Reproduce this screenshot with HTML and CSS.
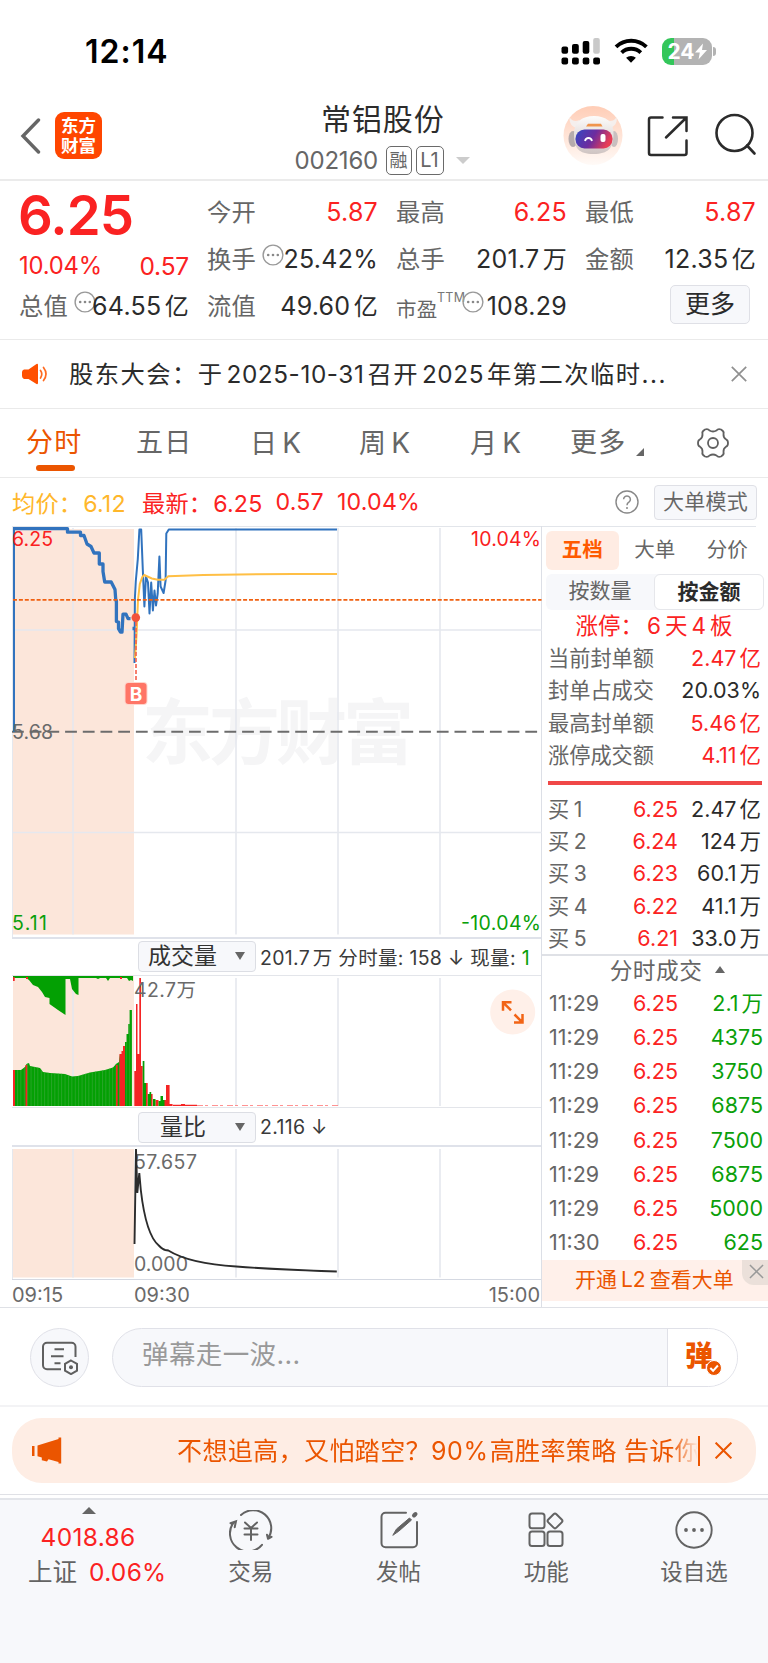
FILE: index.html
```html
<!DOCTYPE html>
<html lang="zh-CN">
<head>
<meta charset="utf-8">
<title>常铝股份 002160</title>
<link rel="stylesheet" href="styles.css">
</head>
<body>
<div class="app">
  <div class="status">
    <div class="clock">12:14</div>
    <svg class="signal" viewBox="560 34 106 34" width="106" height="34">
      <g fill="#000">
        <rect x="561.5" y="46.5" width="6.6" height="7.3" rx="2"/><rect x="572" y="44" width="6.8" height="9.8" rx="2"/><rect x="582.7" y="41" width="6.6" height="12.8" rx="2"/>
        <rect x="561.5" y="57.4" width="6.6" height="7" rx="2"/><rect x="572" y="57.4" width="6.8" height="7" rx="2"/><rect x="582.7" y="57.4" width="6.6" height="7" rx="2"/><rect x="593.2" y="57.4" width="6.8" height="7" rx="2"/>
      </g>
      <rect x="593.2" y="38" width="6.6" height="15.8" rx="2" fill="#c9c9c9"/>
      <g fill="none" stroke="#000" stroke-width="3.9"><path d="M616 46.8a22 22 0 0 1 30.400 0"/><path d="M621.600 52.600a14 14 0 0 1 19.200 0"/></g>
      <path d="M631 62.800l-4.900-5a7.300 7.300 0 0 1 9.800 0z"/>
    </svg>
    <div class="battery"><span>24</span><svg viewBox="0 0 12 16" width="12" height="17"><path d="M8 0L0 9h4.800L3.500 16 12 6.500H7z" fill="#fff"/></svg></div>
  </div>

  <header class="head">
    <svg class="back" viewBox="0 0 22 36" width="22" height="36"><path d="M18.500 2L3 18l15.500 16" fill="none" stroke="#666" stroke-width="3.4" stroke-linecap="round"/></svg>
    <div class="brand">东方<br>财富</div>
    <div class="title">
      <div class="name">常铝股份</div>
      <div class="code"><span class="num">002160</span><b>融</b><b class="l1">L1</b><i></i></div>
    </div>
    <svg class="robot" viewBox="563 106 60 60" width="60" height="60">
      <defs>
        <linearGradient id="halo" x1="0" y1="0" x2="0" y2="1"><stop offset="0" stop-color="#ffcdb6"/><stop offset="1" stop-color="#fffaf7"/></linearGradient>
        <linearGradient id="visor" x1="0" y1="0" x2="1" y2=".3"><stop offset="0" stop-color="#3348c4"/><stop offset=".55" stop-color="#6d2c9e"/><stop offset="1" stop-color="#e83c55"/></linearGradient>
        <linearGradient id="shell" x1="0" y1="0" x2="0" y2="1"><stop offset="0" stop-color="#fdfcfb"/><stop offset="1" stop-color="#cfc4c2"/></linearGradient>
      </defs>
      <circle cx="593" cy="135.500" r="29.500" fill="url(#halo)"/>
      <path d="M577 128c-5-1-8-5-7.500-11 2 4 6 5 10 3zM609 128c5-1 9-5 7.500-11-2 4-6 5-10 3z" fill="#f5efed"/>
      <ellipse cx="573" cy="139" rx="4.500" ry="8" fill="#b5abac"/><ellipse cx="614" cy="139" rx="4" ry="8" fill="#c9bfbf"/>
      <path d="M574 134c0-12 8-18 20-18s20 6 19.500 18c0 14-5 20-20 20s-19.500-6-19.500-20z" fill="url(#shell)"/>
      <rect x="575.500" y="129.500" width="37" height="19" rx="9" fill="url(#visor)"/>
      <path d="M586 126.500l2-2.800h13l1.500 2.800z" fill="#f0954d"/>
      <path d="M585 141c1-4 6-4 7 0" fill="none" stroke="#fff" stroke-width="1.800"/><rect x="600.500" y="134" width="5" height="8" rx="2" fill="#fff"/>
    </svg>
    <svg class="share" viewBox="646 114 44 44" width="44" height="44" fill="none" stroke="#2b2b2b" stroke-width="2.500" stroke-linecap="round"><path d="M662.500 117.500h-11.500a2 2 0 0 0-2 2v33.500a2 2 0 0 0 2 2h33.500a2 2 0 0 0 2-2v-12.500M673 117.500h13.500v13.500M686 118l-20 19.500"/></svg>
    <svg class="find" viewBox="712 114 46 46" width="46" height="46" fill="none" stroke="#2b2b2b" stroke-width="2.600" stroke-linecap="round"><circle cx="734.500" cy="134" r="18"/><path d="M747 146.500l7.500 8"/></svg>
  </header>

  <section class="quote">
    <div class="qcol">
      <div class="price">6.25</div>
      <div class="chg red"><span>10.04%</span><span class="c2">0.57</span></div>
      <div class="kv"><label>总值</label><svg class="dots" viewBox="0 0 22 22" width="22" height="22"><use href="#more"/></svg><span>64.55<u>亿</u></span></div>
    </div>
    <div class="qcol">
      <div class="kv"><label>今开</label><span class="red">5.87</span></div>
      <div class="kv"><label>换手</label><svg class="dots" viewBox="0 0 22 22" width="22" height="22"><use href="#more"/></svg><span>25.42%</span></div>
      <div class="kv"><label>流值</label><span>49.60<u>亿</u></span></div>
    </div>
    <div class="qcol">
      <div class="kv"><label>最高</label><span class="red">6.25</span></div>
      <div class="kv"><label>总手</label><span>201.7<u>万</u></span></div>
      <div class="kv"><label class="pe">市盈</label><sup>TTM</sup><svg class="dots" viewBox="0 0 22 22" width="22" height="22"><g id="more"><circle cx="11" cy="11" r="9.900" fill="none" stroke="#999" stroke-width="1.400"/><g fill="#888"><circle cx="6.200" cy="11" r="1.300"/><circle cx="11" cy="11" r="1.300"/><circle cx="15.800" cy="11" r="1.300"/></g></g></svg><span>108.29</span></div>
    </div>
    <div class="qcol">
      <div class="kv"><label>最低</label><span class="red">5.87</span></div>
      <div class="kv"><label>金额</label><span>12.35<u>亿</u></span></div>
      <div class="morebtn">更多</div>
    </div>
  </section>

  <section class="notice">
    <svg viewBox="0 0 28 22" width="28" height="22"><path d="M2 6.500h4.500L14.500 1q1.500-.6 1.500 1v18q0 1.600-1.500 1L6.500 16H2Q0 15 0 13V9Q0 7 2 6.500z" fill="#ff5000"/><path d="M18.500 7.500q2.600 3.500 0 7.500M21.500 4.500q5 6.500 0 13" fill="none" stroke="#ff6a20" stroke-width="1.700" stroke-linecap="round"/></svg>
    <p>股东大会：于<em>2025-10-31</em>召开<em>2025</em>年第二次临时...</p>
    <svg class="x" viewBox="0 0 16 16" width="16" height="16"><path d="M.8.8l14.400 14.400M15.200.8L.8 15.200" stroke="#909090" stroke-width="1.700"/></svg>
  </section>

  <nav class="tabs">
    <div class="tab on">分时</div><div class="tab t2">五日</div><div class="tab t3">日<em>K</em></div><div class="tab t4">周<em>K</em></div><div class="tab t5">月<em>K</em></div><div class="tab more">更多<i></i></div>
    <svg viewBox="-16 -16 32 32" width="32" height="32" fill="none" stroke="#606060" stroke-width="1.800" stroke-linejoin="round"><path d="M-8-13.500Q-5-14.500-3.500-12.500Q0-10.500 3.500-12.500Q5-14.500 8-13.500Q11.500-11.500 10.500-9Q10.200-5.500 13-3.700Q15-3 15 0Q15 3 13 3.700Q10.200 5.500 10.500 9Q11.500 11.500 8 13.500Q5 14.500 3.500 12.500Q0 10.500-3.500 12.500Q-5 14.500-8 13.500Q-11.500 11.500-10.500 9Q-10.200 5.500-13 3.700Q-15 3-15 0Q-15-3-13-3.700Q-10.200-5.500-10.500-9Q-11.500-11.500-8-13.500z"/><circle r="5"/></svg>
  </nav>

  <div class="legend">
    <span class="avg">均价：<em>6.12</em></span><span class="last red">最新：<em>6.25</em></span><span class="red">0.57</span><span class="red">10.04%</span>
    <svg viewBox="0 0 24 24" width="24" height="24"><circle cx="12" cy="12" r="11" fill="none" stroke="#888" stroke-width="1.400"/><path d="M8.600 9.300a3.400 3.400 0 1 1 5.300 2.900q-1.900 1.200-1.900 3" fill="none" stroke="#888" stroke-width="1.500"/><circle cx="12" cy="18" r="1" fill="#888"/></svg>
    <div class="mode">大单模式</div>
  </div>

  <main class="board">
    <div class="charts">
      <svg class="c1" viewBox="0 526 542 411" width="542" height="411">
        <rect x="13" y="529" width="121" height="405.500" fill="#fce6da"/>
        <text class="mark" x="142" y="758" textLength="272">东方财富</text>
        <g stroke="#e5e8ee" stroke-width="1.600"><path d="M73 528v406.500M236 528v406.500M338 528v406.500M440 528v406.500M12 630h530M12 832.500h530"/><path d="M12.500 526v411" stroke-width="1"/></g>
        <path d="M12 731.800h530" stroke="#6c6c6c" stroke-width="2" stroke-dasharray="11.800 5.900"/>
        <g fill="none" stroke="#3173be" stroke-linejoin="round">
          <path d="M14 528v204" stroke-width="2"/>
          <path d="M13 528.600h54.500v3.600h13v3.300h3.500l3 8.500 4 2.500 3 6.500h5.300v11h3.700v7.500l1.700 10.500h6.500l3.800 7.500.8 11h.6v21l2.100.6v6.500l2 3.500h1.500l1-18h3l2 4.500h2.500M132.500 628.500h2.500" stroke-width="3.300"/>
          <path d="M134.500 663l.4-65 .9-17 2-22 1.600-29.500h1.800l1.600 40 1.600 37 1.600-30 2 6 1.500 31 1.700-31 1.700 28 1.600-20 1.500 15 1.700-12 1.700-37 1.200 30 3 6.500 2-12.500.7-47 2.500-4H337" stroke-width="2"/>
        </g>
        <path d="M135 658l1.500-22 1.500-36 1.800-16 2.500-7 2-2 7.500 3.500 6 1.200h6.500l4-3.500 35-1.300 90-1L337 574" fill="none" stroke="#ffbf45" stroke-width="2"/>
        <path d="M13 599.800h528.500" stroke="#f06010" stroke-width="1.800" stroke-dasharray="4 1.900"/>
        <path d="M136 622v61" stroke="#f4604a" stroke-width="1.600" stroke-dasharray="4 2"/>
        <circle cx="135.800" cy="617.600" r="4.300" fill="#f2523a"/>
        <rect x="124.500" y="682" width="23" height="23" rx="4" fill="#ffd5cc"/><rect x="125.500" y="683" width="21" height="21" rx="3" fill="#ff7566"/>
        <text class="b" x="136" y="701" text-anchor="middle">B</text>
        <text x="12" y="546" fill="#fa2020" textLength="41">6.25</text><text x="12" y="738.500" textLength="41">5.68</text><text x="12" y="930" fill="#0a9f0a" textLength="35">5.11</text>
        <text x="471" y="546" fill="#fa2020" textLength="70">10.04%</text><text x="461" y="930" fill="#0a9f0a" textLength="80">-10.04%</text>
      </svg>
      <div class="bar top"><div class="pick">成交量<i></i></div><p>201.7<u>万</u> 分时量: 158 ↓ 现量: <span class="green">1</span></p></div>
      <svg class="c2" viewBox="0 976 542 131" width="542" height="131">
        <defs>
          <pattern id="fine" width="3.400" height="10" patternUnits="userSpaceOnUse"><path d="M.5 0v10" stroke="#38a838" stroke-width=".7"/></pattern>
          <path id="vol" d="M13 1106v-36h8l4-3 1.500-3 2.500-1 1 3 10 2 3 4 7 1 15 1 7 2.500 6-.5 12-3.500 15-2.500 8-2.500 3-3.500 3-2 1-8h2v-3h1.500v-5h1.500v-4h1.600v-8h1.700v-10h1.400v-14h2.200v96z"/>
        </defs>
        <rect x="13" y="976" width="121" height="130" fill="#fce6da"/>
        <path d="M73 978v128M236 978v128M338 978v128M440 978v128" stroke="#e5e8ee" stroke-width="1.600"/>
        <use href="#vol" fill="#03a003"/><use href="#vol" fill="url(#fine)"/>
        <path d="M13 976H133V981L131 980L129 981L127 978H110L108 981L106 978H100L98 979L96 978H78.500V995L76 994L72 989L70 979H65.500V1015L58 1010L49.500 1004V998L45 997L42 992L38 987L33 985L29 980L26 978H13z" fill="#03a003"/>
        <g fill="#f52424"><path d="M13 1070h2v36h-2zM25.500 1065h1.700v41h-1.700zM116 1065h1.700v41H116zM119.500 1062v-8h2v-3h1.500v-5h2v60h-5.500zM13 977h1.700v4H13zM26 977h2v2h-2zM120 977h2v2h-2z"/>
        <path d="M134.300 1071h1.700v-67h1.500v50h1.800v-76h1.700v88h1.700v40h-8.400zM146 1083h1.700v23H146zM151 1094h1.600v12H151zM155.500 1100h3v6h-3zM163.500 1100h2.500v-15h3.600v19h3v2h-9zM173 1104.800h8v-.8h4v.8h12v1.200h-24z"/></g>
        <path d="M197 1105.500h141" stroke="#f77" stroke-width=".8" stroke-dasharray="6 2 3 4"/>
        <path d="M142.700 1061h1.700v22h1.600v23h-3.300zM147.800 1094h1.700v-2h1.700v14h-3.400zM153 1099h2.500v7H153zM158.500 1101h2v-5h2.500v4h1.500v6h-6z" fill="#03a003"/>
        <text x="134" y="997" textLength="62">42.7万</text>
        <circle cx="512.700" cy="1012" r="22.500" fill="#fff0e9"/>
        <g fill="none" stroke="#f26416" stroke-width="2.500"><path d="M511.500 1002.300h-8.500v8.500M503.500 1002.800l7.500 7.500M514 1022.500h8.500v-8.500M522 1022l-7.500-7.500"/></g>
      </svg>
      <div class="bar"><div class="pick two">量比<i></i></div><p>2.116 ↓</p></div>
      <svg class="c3" viewBox="0 1147 542 132" width="542" height="132">
        <rect x="13" y="1149" width="121" height="128.500" fill="#fce6da"/>
        <path d="M73 1149v128.500M236 1149v128.500M338 1149v128.500M440 1149v128.500" stroke="#e5e8ee" stroke-width="1.600"/><path d="M12.500 1149v130" stroke="#e5e8ee"/>
        <text x="134" y="1168.500" textLength="63">57.657</text><text x="134" y="1270.500" textLength="54">0.000</text>
        <path d="M134.500 1244l1.500-95 1.300 44 2-20 1.500 17c3 26 9 48 18 55.500q4 4 6.500 4.500l3 .5c13 8 35 14 68 16 40 3 70 4 100.500 5" fill="none" stroke="#2c2c2c" stroke-width="1.900"/>
      </svg>
      <div class="axis"><span>09:15</span><span>09:30</span><span>15:00</span></div>
    </div>

    <aside class="side">
      <div class="stabs"><span class="on">五档</span><span>大单</span><span>分价</span></div>
      <div class="seg"><span>按数量</span><span class="on">按金额</span></div>
      <div class="limit red">涨停：<em>6</em>天<em>4</em>板</div>
      <div class="rows">
        <div><label>当前封单额</label><span class="red">2.47<u>亿</u></span></div>
        <div><label>封单占成交</label><span>20.03%</span></div>
        <div><label>最高封单额</label><span class="red">5.46<u>亿</u></span></div>
        <div><label>涨停成交额</label><span class="red">4.11<u>亿</u></span></div>
      </div>
      <div class="rule"></div>
      <div class="rows buy">
        <div><label>买<u>1</u></label><b>6.25</b><span>2.47<u>亿</u></span></div>
        <div><label>买<u>2</u></label><b>6.24</b><span>124<u>万</u></span></div>
        <div><label>买<u>3</u></label><b>6.23</b><span>60.1<u>万</u></span></div>
        <div><label>买<u>4</u></label><b>6.22</b><span>41.1<u>万</u></span></div>
        <div><label>买<u>5</u></label><b>6.21</b><span>33.0<u>万</u></span></div>
      </div>
      <div class="deal">分时成交<i></i></div>
      <div class="rows ticks">
        <div><label>11:29</label><b>6.25</b><span>2.1<u>万</u></span></div>
        <div><label>11:29</label><b>6.25</b><span>4375</span></div>
        <div><label>11:29</label><b>6.25</b><span>3750</span></div>
        <div><label>11:29</label><b>6.25</b><span>6875</span></div>
        <div><label>11:29</label><b>6.25</b><span>7500</span></div>
        <div><label>11:29</label><b>6.25</b><span>6875</span></div>
        <div><label>11:29</label><b>6.25</b><span>5000</span></div>
        <div><label>11:30</label><b>6.25</b><span>625</span></div>
      </div>
      <div class="l2">开通<em>L2</em>查看大单<div class="l2x"><svg viewBox="0 0 16 16" width="15" height="15"><path d="M1 1l14 14M15 1L1 15" stroke="#999" stroke-width="1.600"/></svg></div></div>
    </aside>
  </main>

  <section class="talk">
    <div class="round"><svg viewBox="41 1341 38 34" width="38" height="34" fill="none" stroke="#5f5f5f" stroke-width="2"><path d="M61 1369.200h-14a4 4 0 0 1-4-4v-18.400a4 4 0 0 1 4-4h24.500a4 4 0 0 1 4 4v10.200M54.500 1349.300h9.500M51 1356.200h12.500M54.500 1363.200h6"/><path d="M71 1360.500l6 3.400v6.800l-6 3.400-6-3.400v-6.800z"/><circle cx="71" cy="1367.300" r="2" fill="#5f5f5f" stroke="none"/></svg></div>
    <div class="input"><span>弹幕走一波...</span><div class="send">弹<svg viewBox="0 0 16 16" width="16" height="16"><circle cx="8" cy="8" r="7.500" fill="#eb5500" stroke="#fff"/><path d="M4.300 8l2.800 2.800 4.800-5.300" fill="none" stroke="#fff" stroke-width="2"/></svg></div></div>
  </section>

  <section class="promo">
    <div class="pill">
      <svg viewBox="31 1437 31 28" width="31" height="28" fill="#eb5500"><path d="M32 1446h2.500v10H32zM37.500 1445.500l21-6.500v-1.500h2.700v26h-2.700v-1.500l-10-2.800-1.500 2.300-5.200-1.300v-2.700l-4.300-1.200z"/></svg>
      <p>不想追高，又怕踏空？<em>90%</em>高胜率策略 告诉你</p>
      <svg class="px" viewBox="0 0 16 16" width="17" height="17"><path d="M.6.6l14.800 14.800M15.400.6L.6 15.400" stroke="#eb5500" stroke-width="1.900"/></svg>
    </div>
  </section>

  <footer class="foot">
    <div class="index"><i></i><strong>4018.86</strong><p>上证<em>0.06%</em></p></div>
    <div class="item"><svg viewBox="-22 -20 44 40" width="44" height="40" fill="none" stroke="#636363" stroke-width="2" stroke-linecap="round"><path d="M-10-15A18 18 0 0 1 17 8.500M17 8.800l3.500-2M17 8.800l-1-4M-17-8A18 18 0 0 0 11 14.800M-20.500-6.800l5.500-2-1.300 6M-6-7.500L0-2 6-7.500M0-2V10M-6.500-1.500h13M-6.500 4.500h13"/></svg><span>交易</span></div>
    <div class="item"><svg viewBox="-22 -20 44 40" width="44" height="40" fill="none" stroke="#636363" stroke-width="2" stroke-linecap="round"><path d="M7-17.300H-13.500a4 4 0 0 0-4 4V13.300a4 4 0 0 0 4 4h27.500a4 4 0 0 0 4-4V-8"/><path d="M-6 5l3.500-6L10.500-12l2 2L0 1z" fill="#636363" stroke-width="1"/><path d="M15-14.500l1.500-1.500" stroke-width="4"/></svg><span>发帖</span></div>
    <div class="item"><svg viewBox="-22 -20 44 40" width="44" height="40" fill="none" stroke="#636363" stroke-width="2"><rect x="-16.500" y="-16.500" width="15" height="14.800" rx="2.500"/><rect x="-16.500" y="1.500" width="15" height="14.500" rx="2.500"/><rect x="1.500" y="1.500" width="15" height="14.500" rx="2.500"/><rect x="3.200" y="-14.800" width="11.500" height="11.500" rx="2" transform="rotate(45 9 -9)"/></svg><span>功能</span></div>
    <div class="item"><svg viewBox="-22 -20 44 40" width="44" height="40"><circle r="17.700" fill="none" stroke="#636363" stroke-width="1.900"/><g fill="#636363"><circle cx="-8" r="1.900"/><circle r="1.900"/><circle cx="8" r="1.900"/></g></svg><span>设自选</span></div>
  </footer>
</div>
</body>
</html>
```
FILE: styles.css
```css
*{box-sizing:border-box}
body{margin:0;background:#fff}
.app{width:768px;height:1663px;overflow:hidden;font-family:Inter,"Noto Sans CJK SC",sans-serif;color:#2b2b2b;white-space:nowrap}
em,i,u,b{font-style:normal;text-decoration:none;font-weight:inherit}
p{margin:0}
svg{display:block;flex:none}
.red{color:#fb2222!important}
.green{color:#0a9f0a}

.status{height:90px;display:flex;align-items:flex-start;padding:34px 52px 0 85px}
.clock{font-size:32px;font-weight:600;line-height:35px;letter-spacing:1px;color:#000;width:475px}
.battery{position:relative;width:50px;height:27px;margin:4px 0 0 -4px;border-radius:9px;background:linear-gradient(90deg,#33c65a 12px,#b3b3b3 12px);display:flex;align-items:center;justify-content:center;color:#fff;font-size:21px;font-weight:700}
.battery::after{content:"";position:absolute;left:51px;top:9px;width:3px;height:9px;border-radius:0 4px 4px 0;background:#b3b3b3}

.head{height:91px;border-bottom:2px solid #ebebeb;display:flex;align-items:center;padding:2px 10px 0 20px}
.back{margin-top:1px}
.brand{width:47px;height:47px;margin-left:13px;background:#ff4600;border-radius:9px;color:#fff;font-size:17.500px;font-weight:700;line-height:19.500px;padding-top:4px;text-align:center}
.title{width:240px;margin-left:161px;display:flex;flex-direction:column;align-items:center;height:90px}
.name{font-size:30px;line-height:36px;letter-spacing:.9px;margin-top:10px;width:124px;color:#2c2c2c}
.code{display:flex;align-items:center;margin:9px 2px 0 0;height:30px;color:#666;font-size:24px}
.code .num{width:91px;letter-spacing:-.2px}
.code b{border:1.500px solid #6a6a6a;border-radius:5px;height:29px;width:26px;line-height:27px;text-align:center;font-size:18px;margin-right:4px}
.code b.l1{width:28px;font-size:20px;margin-right:12px}
.code i{border:7px solid transparent;border-top-color:#ccc;border-bottom:0}
.robot{margin-left:60px}
.share{margin-left:23px}
.find{margin-left:22px}

.quote{height:159px;border-bottom:1px solid #eaeaea;display:grid;grid-template-columns:189px 189px 189px 189px}
.qcol{padding:7.500px 0 0 19px}
.qcol+.qcol{padding-left:18px}
.kv{height:47px;display:flex;align-items:center;font-size:25px;line-height:47px;letter-spacing:.25px}
.kv label{font-size:24.300px;color:#666;width:50px}
.kv label.pe{font-size:20.500px;width:41px;padding-top:6px}
.kv sup{font-size:12.500px;line-height:20px;color:#777;margin-top:-16px;width:25px}
.kv span{margin-left:auto}
.kv u,.bar u{margin-left:.14em}
.rows u{margin-left:.14em}
.rows label u{margin-left:.22em}
.kv u{font-size:24px}
.dots{margin:-9px -30px 0 5px}
sup+.dots{margin-left:0}
.price{font-size:54.500px;font-weight:600;line-height:53px;height:47px;color:#fa2222;letter-spacing:-.9px;margin-left:-1px}
.chg{height:47px;display:flex;justify-content:space-between;align-items:center;font-size:23.800px;padding-top:12px;letter-spacing:-.2px}
.chg .c2{font-size:24.500px;padding-top:1px}
.morebtn{width:80px;height:39px;margin:2px 6px 0 auto;border:1.500px solid #dfe0e6;border-radius:5px;background:#f7f8fb;font-size:25px;line-height:37px;text-align:center}

.notice{height:69px;border-bottom:1px solid #eaeaea;display:flex;align-items:center;padding:0 21px 0 22px}
.notice p{font-size:24.300px;letter-spacing:1.450px;margin:-4px 0 0 19px;flex:1}
.notice em{letter-spacing:.6px;margin:0 3px}

.tabs{height:69px;border-bottom:1px solid #eaeaea;display:flex;align-items:center;font-size:27px;color:#666;padding-left:26px}
.tab{width:110px;line-height:66px;letter-spacing:1.300px}
.tab em{margin-left:4px;font-size:28px}
.tab.on{color:#eb5500;position:relative}
.tab.on::after{content:"";position:absolute;left:10px;top:55px;width:39px;height:6px;border-radius:3px;background:#eb5500}
.tab.t2{width:114px}
.tab.t3{width:109px}
.tab.t4{width:111px}
.tab.t5{width:100px}
.tab.more{width:127px;display:flex}
.tab.more i{margin:38px 0 0 9px;width:0;height:0;border-left:8px solid transparent;border-bottom:8px solid #666;align-self:flex-start}

.legend{height:48px;display:flex;align-items:center;font-size:23.200px;padding:0 11px 0 12px;letter-spacing:.2px}
.legend span{margin-right:13px}
.legend .avg{color:#ffb72b;width:130px;margin:0}
.legend span em{margin-left:1px}
.legend svg{margin-left:auto}
.mode{width:103px;height:35px;margin-left:15px;border:1.500px solid #dfe0e6;border-radius:4px;background:#f7f8fb;color:#666;font-size:21px;line-height:32px;text-align:center}

.board{height:782px;display:flex;border-bottom:1px solid #dfe1e6;background:linear-gradient(90deg,transparent 12px,#e2e5ea 12px,#e2e5ea 756px,transparent 756px) 0 0/100% 1px no-repeat}
.charts{width:542px;border-right:1px solid #dcdfe6}
.charts text{font-size:19.500px;fill:#6a6a6a}
.charts text[fill="#fa2020"]{fill:#fa2020}
.charts text[fill="#0a9f0a"]{fill:#0a9f0a}
.charts .mark{font-size:71px;font-weight:700;fill:#f5f5f6}
.charts .b{font-size:19px;font-weight:700;fill:#fff}
.bar{height:40px;margin-left:12px;padding-top:1px;border-top:1px solid #e3e5ea;border-bottom:2px solid #dfe2ea;display:flex;align-items:center;font-size:19.500px;letter-spacing:.3px;color:#3a3a3a}
.bar.top{height:39px;padding:0 0 2px;border-top:2px solid #dfe2ea;border-bottom:1px solid #e3e5ea}
.pick{width:118px;height:31px;margin-left:126px;border:1.500px solid #dcdee4;border-radius:4px;background:#f7f8fb;font-size:23px;letter-spacing:0;line-height:29px;padding-left:9px;display:flex;color:#333}
.pick.two{padding-left:21px}
.pick i{margin:10px 10px 0 auto;border:5px solid transparent;border-top:8px solid #666;border-bottom:0;height:0}
.bar p{margin-left:4px}
.axis{height:28px;border-top:1.500px solid #d5d9e2;margin-left:12px;display:flex;font-size:20px;line-height:31px;color:#6a6a6a}
.axis span{width:122px}
.axis span:last-child{margin-left:auto;width:auto;margin-right:1px}

.side{flex:1;padding-top:5px;position:relative}
.stabs{display:flex;margin-left:4px;font-size:20.500px;color:#666;line-height:38px}
.stabs span{width:72.500px;height:39px;text-align:center;border-radius:6px}
.stabs .on{background:#ffece3;color:#ff5a00;font-weight:700}
.seg{display:flex;margin:4px 4px 0;height:36px;background:#f7f8fb;border-radius:6px;font-size:21px;line-height:33px;color:#666;text-align:center}
.seg span{flex:1}
.seg .on{background:#fff;border:1.500px solid #e6e7eb;border-radius:6px;color:#2b2b2b;font-weight:700}
.limit{font-size:22.500px;line-height:32px;height:32px;text-align:center;padding-right:2px}
.limit em{margin:0 4px}
.rows{padding:0 7px 0 6px;color:#2b2b2b}
.rows div{display:flex;height:32.300px;line-height:32.300px;font-size:21.500px}
.rows label{color:#666;width:80px;font-size:21.200px}
.rows span{margin-left:auto}
.rows b{width:50px;text-align:right;color:#fb2222}
.rule{height:4px;margin:10px 6px 7.500px;background:#f04848}
.buy{height:161px}
.deal{border-top:2px solid #dfe1e6;height:33px;display:flex;justify-content:center;font-size:22.700px;letter-spacing:.5px;line-height:30px;color:#666;padding-left:25px}
.deal i{margin:10px 0 0 13px;height:0;border:5.500px solid transparent;border-bottom:7px solid #666;border-top:0}
.ticks div{height:34.250px;line-height:33.400px}
.ticks{padding:0 5px 0 7px}
.ticks label{font-size:21.500px;width:79px}
.ticks span{color:#0a9f0a}
.l2{position:absolute;left:0;right:0;top:734px;height:41px;background:#fff0ea;color:#eb5500;font-size:21px;line-height:39px;padding-left:33px}
.l2 em{margin:0 4px}
.l2x{position:absolute;right:0;top:0;width:26px;height:25px;background:#ebe0da;border-radius:0 0 0 12px;padding:4px 0 0 7px}

.talk{height:99px;border-bottom:2px solid #f3f3f5;display:flex;padding:20px 30px 18px}
.round{width:59px;height:59px;border:1.500px solid #e0e1e8;border-radius:50%;background:#f7f8fb;display:flex;align-items:center;justify-content:center}
.input{width:626px;height:59px;margin-left:23px;border:1.500px solid #e0e1e8;border-radius:30px;background:#f7f8fb;overflow:hidden;display:flex;font-size:26.500px;letter-spacing:.4px;color:#999;line-height:51px;padding-left:29px;justify-content:space-between}
.send{width:70px;height:60px;background:#fff;border-left:1.500px solid #e0e1e8;color:#eb5500;font-weight:900;font-size:28px;line-height:54px;padding-left:17px;position:relative}
.send svg{position:absolute;left:38px;top:31px}

.promo{height:88px;border-bottom:1px solid #e0e1e6;padding:11px 12px}
.pill{height:65px;border-radius:30px;background:#feede4;display:flex;align-items:center;padding:0 24px 0 19px;color:#eb5500}
.pill p{width:523px;margin-left:115px;font-size:25px;line-height:31px;height:30px;overflow:hidden;border-right:2px solid #eb5500;letter-spacing:.4px;-webkit-mask-image:linear-gradient(90deg,#000 495px,transparent 521px,#000 521px)}
.pill em{margin-right:1px;letter-spacing:.6px}
.px{margin-left:auto}

.foot{height:165px;margin-top:3px;border-top:2px solid #e3e5ea;background:#f7f8fb;display:flex;color:#636363;font-size:22.500px}
.index{width:177px}
.index i{display:block;width:0;height:0;margin:7px 0 0 82px;border:7px solid transparent;border-bottom-color:#666;border-top:0}
.index strong{display:block;font-weight:400;font-size:24.500px;letter-spacing:.3px;line-height:34px;color:#fb2222;margin-top:6px;width:176px;text-align:center}
.index p{font-size:24.500px;line-height:36px;padding-left:28px}
.index em{color:#fb2222;margin-left:12px;letter-spacing:.3px}
.item{width:147.700px;display:flex;flex-direction:column;align-items:center;padding-top:10px}
.item span{line-height:34px;margin-top:5px}
```
